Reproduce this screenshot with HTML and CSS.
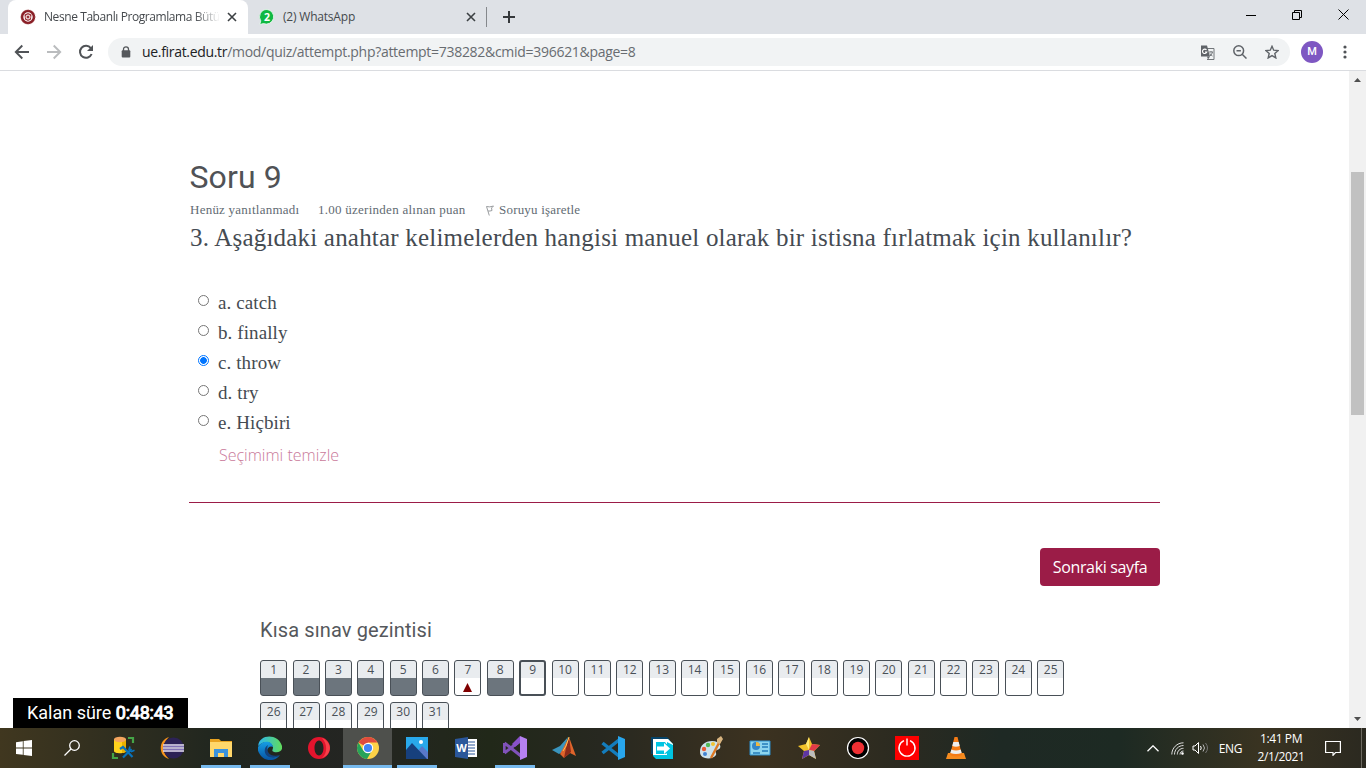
FILE: index.html
```html
<!DOCTYPE html>
<html lang="tr">
<head>
<meta charset="utf-8">
<title>Nesne Tabanlı Programlama Bütünleme</title>
<link rel="stylesheet" href="styles.css">
</head>
<body>
<div class="screen">
  <header class="tabs">
    <div class="tab tab-active">
      <svg class="fav" width="16" height="16" viewBox="0 0 16 16"><circle cx="8" cy="8" r="6" fill="#fff" stroke="#8a1f27" stroke-width="2.6"/><circle cx="8" cy="8" r="7.2" fill="none" stroke="#c99" stroke-width=".6" stroke-dasharray="1 1"/><path d="M4.500 5.500l3.500-1.500 3.500 1.500-.5 5-3 1.500-3-1.500z" fill="#9c343b"/><circle cx="8" cy="8" r="2" fill="none" stroke="#fff"/></svg>
      <span class="tab-title fade">Nesne Tabanlı Programlama Bütü</span>
      <svg class="x" width="10" height="10" viewBox="0 0 10 10"><path d="M1 1l8 8M9 1l-8 8" stroke="#3c4043" stroke-width="1.600"/></svg>
    </div>
    <div class="tab tab-second">
      <svg class="fav" width="16" height="16" viewBox="0 0 16 16"><path d="M8 .5a7.300 7.300 0 1 1-3.500 14L.8 15.500l1-3.600A7.300 7.300 0 0 1 8 .5z" fill="#10b843" stroke="#eefbf1" stroke-width=".8"/><text x="8" y="11.700" text-anchor="middle" class="badge">2</text></svg>
      <span class="tab-title">(2) WhatsApp</span>
      <svg class="x" width="10" height="10" viewBox="0 0 10 10"><path d="M1 1l8 8M9 1l-8 8" stroke="#3c4043" stroke-width="1.600"/></svg>
    </div>
    <div class="tab-new"><svg width="12" height="12" viewBox="0 0 12 12"><path d="M6 0v12M0 6h12" stroke="#35383b" stroke-width="2"/></svg></div>
    <div class="win">
      <svg width="10" height="10" viewBox="0 0 10 10"><path d="M0 5.500h10" stroke="#000"/></svg>
      <svg width="10" height="10" viewBox="0 0 10 10" fill="none" stroke="#000"><path d="M.5 2.500h7v7h-7zM2.500 2.500v-2h7v7h-2"/></svg>
      <svg width="11" height="11" viewBox="0 0 11 11"><path d="M.5.5l10 10M10.500.5l-10 10" stroke="#000"/></svg>
    </div>
  </header>
  <div class="toolbar">
    <svg class="nav-icon" width="16" height="16" viewBox="0 0 16 16" fill="none" stroke="#505357" stroke-width="1.900"><path d="M15 8H2M8.300 1.500L1.800 8l6.500 6.500"/></svg>
    <svg class="nav-icon" width="16" height="16" viewBox="0 0 16 16" fill="none" stroke="#babcbe" stroke-width="1.900"><path d="M1 8h13M7.700 1.500L14.200 8l-6.500 6.500"/></svg>
    <svg class="nav-icon" width="16" height="16" viewBox="0 0 16 16"><path d="M13.600 10A6 6 0 1 1 12.800 4.200" fill="none" stroke="#505357" stroke-width="2"/><path d="M15 1v6H9z" fill="#505357"/></svg>
    <div class="address">
      <svg width="10" height="12" viewBox="0 0 10 12"><path d="M2.500 5V3.300a2.500 2.500 0 0 1 5 0V5" fill="none" stroke="#55585c" stroke-width="1.300"/><rect x=".7" y="4.300" width="8.600" height="7.300" rx="1" fill="#55585c"/></svg>
      <span class="url"><b>ue.firat.edu.tr</b>/mod/quiz/attempt.php?attempt=738282&amp;cmid=396621&amp;page=8</span>
      <svg width="15" height="15" viewBox="0 0 15 15"><path d="M7 3.500h7v11H7" fill="#f1f3f4" stroke="#72767a"/><path d="M1 .5h6l3 11H1z" fill="#5f6368"/><path d="M6.500 5a2.200 2.200 0 1 0 .3 2H5" fill="none" stroke="#fff" stroke-width="1.100"/><path d="M9 7h4M11 6v1M12.500 7q-.5 2.500-2.500 4M10 8.500q1 2 2.500 2.500" fill="none" stroke="#72767a"/><path d="M7 11.500h3l-2 3z" fill="#5f6368"/></svg>
      <svg class="mag" width="14" height="14" viewBox="0 0 14 14" fill="none" stroke="#5f6368" stroke-width="1.500"><circle cx="5.700" cy="5.700" r="4.900"/><path d="M3.500 5.700h4.400M9.200 9.200l4.300 4.300"/></svg>
      <svg class="star" width="14" height="14" viewBox="0 0 14 14"><path d="M7 1.300l1.700 3.900 4.400.4-3.300 2.900 1 4.400L7 10.600l-3.800 2.300 1-4.400L.9 5.600l4.400-.4z" fill="none" stroke="#5f6368" stroke-width="1.400"/></svg>
    </div>
    <div class="avatar">M</div>
    <svg class="dots" width="4" height="14" viewBox="0 0 4 14" fill="#505357"><circle cx="2" cy="2" r="1.600"/><circle cx="2" cy="7" r="1.600"/><circle cx="2" cy="12" r="1.600"/></svg>
  </div>

  <div class="viewport">
    <main class="page">
      <h3 class="title">Soru 9</h3>
      <div class="info">
        <span class="i1">Henüz yanıtlanmadı</span><span class="i2">1.00 üzerinden alınan puan</span>
        <svg width="9" height="11" viewBox="0 0 9 11" fill="none" stroke="#9a9da0"><path d="M.5 1.500l2.800 9M.5 1.500q3 1 7-.5L5.500 3l.5 2.500q-2 .8-4 .5" /></svg><span class="i3">Soruyu işaretle</span>
      </div>
      <p class="question">3. Aşağıdaki anahtar kelimelerden hangisi manuel olarak bir istisna fırlatmak için kullanılır?</p>
      <div class="answers">
        <label><i class="radio"></i><span>a. catch</span></label>
        <label><i class="radio"></i><span>b. finally</span></label>
        <label><i class="radio radio-on"></i><span>c. throw</span></label>
        <label><i class="radio"></i><span>d. try</span></label>
        <label><i class="radio"></i><span>e. Hiçbiri</span></label>
      </div>
      <a class="clear">Seçimimi temizle</a>
      <div class="rule"></div>
      <div class="actions"><button class="next">Sonraki sayfa</button></div>
      <section class="quiznav">
        <h5>Kısa sınav gezintisi</h5>
        <div class="cells">
          <a class="cell done">1</a><a class="cell done">2</a><a class="cell done">3</a><a class="cell done">4</a><a class="cell done">5</a><a class="cell done">6</a><a class="cell">7<svg width="9" height="9" viewBox="0 0 9 9"><path d="M4.500 0L9 9H0z" fill="#800000"/></svg></a><a class="cell done">8</a><a class="cell current">9</a><a class="cell">10</a><a class="cell">11</a><a class="cell">12</a><a class="cell">13</a><a class="cell">14</a><a class="cell">15</a><a class="cell">16</a><a class="cell">17</a><a class="cell">18</a><a class="cell">19</a><a class="cell">20</a><a class="cell">21</a><a class="cell">22</a><a class="cell">23</a><a class="cell">24</a><a class="cell">25</a><a class="cell">26</a><a class="cell">27</a><a class="cell">28</a><a class="cell">29</a><a class="cell">30</a><a class="cell">31</a>
        </div>
      </section>
    </main>
    <div class="scrollbar"><svg width="7" height="4" viewBox="0 0 7 4"><path d="M3.500 0L7 4H0z" fill="#505050"/></svg><div class="thumb"></div><svg width="7" height="4" viewBox="0 0 7 4"><path d="M3.500 4L7 0H0z" fill="#505050"/></svg></div>
    <div class="timer"><span>Kalan süre</span> <b>0:48:43</b></div>
  </div>

  <footer class="taskbar">
    <div class="task start"><svg width="16" height="16" viewBox="0 0 16 16" fill="#fff"><path d="M0 2.200l6.800-1v6.300H0zM7.600 1.100L16 0v7.500H7.600zM0 8.400h6.800v6.400L0 13.900zM7.600 8.400H16V16l-8.400-1.100z"/></svg></div>
    <div class="task start"><svg width="16" height="16" viewBox="0 0 16 16" fill="none" stroke="#fff" stroke-width="1.300"><circle cx="10.500" cy="5.500" r="4.800"/><path d="M7 9L.5 15.500"/></svg></div>
    <div class="task first"><svg width="24" height="24" viewBox="0 0 24 24"><path d="M3 3v12c0 3 12 3 12 0V3z" fill="#ffd21c"/><path d="M11 4h4v12l-4 1z" fill="#eab000"/><ellipse cx="9" cy="3.500" rx="6" ry="2.700" fill="#f3a45e"/><path d="M17 2h5v5M2 17v5h5" fill="none" stroke="#45a447" stroke-width="2.200"/><path d="M9 13l3-2 3 3M13.500 12.500l8 8.500M20.500 13L12 21.500" fill="none" stroke="#0873bd" stroke-width="2.200"/><path d="M19 10.500l-1 3 2.500 2 3-1.200" fill="none" stroke="#0873bd" stroke-width="1.600"/></svg></div>
    <div class="task"><svg width="24" height="24" viewBox="0 0 24 24"><path d="M9 1C-2 4-2 20 9 23C2 17 2 7 9 1z" fill="#f7941e"/><circle cx="13.500" cy="12" r="10.500" fill="#2c2255"/><path d="M3 9h21M3 12h21M3 15h21" stroke="#e8e2f5" stroke-width="1.600"/><path d="M3 10.500h21M3 13.500h21" stroke="#8172b5" stroke-width="1"/></svg></div>
    <div class="task open"><svg width="24" height="24" viewBox="0 0 24 24"><path d="M1 3h9l2 2h11v16H1z" fill="#e8a321"/><path d="M1 6h22v15H1z" fill="#ffd76b"/><path d="M5 21v-8h14v8h-4v-4H9v4z" fill="#3a92dd"/></svg></div>
    <div class="task open"><svg width="24" height="24" viewBox="0 0 24 24"><defs><linearGradient id="edge-a" x2="1"><stop stop-color="#2db6ef"/><stop offset="1" stop-color="#61dc5b"/></linearGradient><linearGradient id="edge-b" y2="1" x2="0"><stop stop-color="#169ee4"/><stop offset="1" stop-color="#0753a3"/></linearGradient></defs><path d="M.2 10C1-2 20-3 24 10c1 5-3 7-8 6-3-1-1-2-1-5C13 4 5 5 .2 10z" fill="url(#edge-a)"/><path d="M0 11C4 4 14 4 15 11c-3-2-8 2-5 7 2 4 8 4 12 1-5 7-14 6-18 2-3-3-5-7-4-10z" fill="url(#edge-b)"/><path d="M10 9c-5 3-4 10 1 12 4 1 8 0 11-2-9 3-15-3-12-10z" fill="#13427e"/></svg></div>
    <div class="task"><svg width="24" height="24" viewBox="0 0 24 24"><path fill-rule="evenodd" d="M12 1a11 11 0 1 0 0 22 11 11 0 1 0 0-22zm0 3.500c3 0 4.500 4 4.500 7.500s-1.500 7.500-4.500 7.500-4.500-4-4.500-7.500S9 4.500 12 4.500z" fill="#e3142d"/><path d="M15 2c11 4 10 17 0 20 6-5 5-15 0-20z" fill="#ff5355" opacity=".7"/></svg></div>
    <div class="task open active"><svg width="24" height="24" viewBox="0 0 24 24"><circle cx="12" cy="12" r="11" fill="#fdd247"/><path d="M12 12L2.500 6.500A11 11 0 0 1 21.500 6.500H12z" fill="#df4b3d"/><path d="M2.500 6.500A11 11 0 0 0 11 23l5-8.500-4-2.500-4.700 2.700z" fill="#26a35a"/><circle cx="12" cy="12" r="5.200" fill="#fff"/><circle cx="12" cy="12" r="4.100" fill="#4285f4"/></svg></div>
    <div class="task open"><svg width="24" height="24" viewBox="0 0 24 24"><path d="M1 1h22v22H1z" fill="#29a9eb"/><path d="M12 16l5-6 6 6v7H12z" fill="#5978c9"/><path d="M1 14l6-7 15 16H1z" fill="#17407d"/><circle cx="16" cy="6" r="2" fill="#fff"/></svg></div>
    <div class="task"><svg width="24" height="24" viewBox="0 0 24 24"><path d="M12 3h11v18H12z" fill="#fff"/><path d="M13 6h8M13 9h8M13 12h8M13 15h8M13 18h8" stroke="#2b579a"/><path d="M1 3l13-2v22L1 21z" fill="#2b579a"/><text x="7.500" y="16" text-anchor="middle" class="word-letter">W</text></svg></div>
    <div class="task open"><svg width="24" height="24" viewBox="0 0 24 24"><path d="M1.200 7v10M1.500 7L18 20M1.500 17L18 4" stroke="#8052ba" stroke-width="3"/><path d="M17 0l7 3v18l-7 3z" fill="#b681f2"/><path d="M17 0L9 8l3 3 5-4z" fill="#8951ca"/></svg></div>
    <div class="task"><svg width="24" height="24" viewBox="0 0 24 24"><path d="M0 14l8-4 8-9-4 14-5 3z" fill="#3994bd"/><path d="M8 18l9-17 7 19-6-3-6 5z" fill="#de642b"/><path d="M17 1l2 15-7 6 2-10z" fill="#8d2b19"/><path d="M17 1l-3 9-3 5" stroke="#ffc256" fill="none"/></svg></div>
    <div class="task"><svg width="24" height="24" viewBox="0 0 24 24"><path d="M1.500 7L18 20M1.500 17L18 4" stroke="#147dbd" stroke-width="3.500"/><path d="M17 0l7 3v18l-7 3z" fill="#28a6ed"/></svg></div>
    <div class="task"><svg width="24" height="24" viewBox="0 0 24 24"><path d="M1 1h16l3 3v14H1z" fill="#064368"/><path d="M3 3h15l5 5v15H6l-3-3z" fill="#00c4e2"/><path d="M3 3h15l5 5v1l-6-3H3z" fill="#fff"/><path d="M3 3h14v5H7v8h10v3H3z" fill="#fff"/><path d="M6 6h9l3 4v7l-3 1H6z" fill="#00c4e2"/><path d="M7 10.500h7V7l6 5.500-6 5.500v-3.500H7z" fill="#fff"/></svg></div>
    <div class="task"><svg width="24" height="24" viewBox="0 0 24 24"><path d="M1 16C1 9 6 5 13 5c9 0 11 8 5 9-3 1 0 3-1 5C14 24 1 24 1 16z" fill="#cce2ed"/><circle cx="5" cy="13" r="2.200" fill="#e95b37"/><circle cx="9" cy="9" r="2.200" fill="#54b957"/><circle cx="14" cy="8" r="2" fill="#f1c333"/><circle cx="6" cy="18" r="2" fill="#4082d2"/><path d="M21 5l-9 17" stroke="#dc7825" stroke-width="2.400"/><path d="M18 3l4-3 2 3-3 5-3-1z" fill="#d9b580"/></svg></div>
    <div class="task"><svg width="24" height="24" viewBox="0 0 24 24"><path d="M2 5h20v14H2z" fill="#8dd5ef" stroke="#2b8dcc"/><circle cx="8" cy="10" r="4" fill="#3586c7"/><path d="M8 10V6a4 4 0 0 1 4 4z" fill="#f0b842"/><path d="M14 8h6M14 11h6M5 17h7M14 15h6" stroke="#247cbb" stroke-width="1.500"/></svg></div>
    <div class="task"><svg width="24" height="24" viewBox="0 0 24 24"><path d="M12 1l3 7 8 1-6 6 2 8-7-4-7 4 2-8-6-5 8-2z" fill="#f1c229"/><path d="M12 14l3-6 8 1-6 6z" fill="#e23b48"/><path d="M12 14l5 1 2 8-7-4z" fill="#bcbcbc"/><path d="M12 14v5l-7 4 2-8z" fill="#5d36a4"/><path d="M12 1v13L9 8z" fill="#ffea75"/></svg></div>
    <div class="task"><svg width="24" height="24" viewBox="0 0 24 24"><circle cx="12" cy="12" r="10.500" fill="#000" stroke="#fff" stroke-width="1.200"/><circle cx="12" cy="12" r="6.200" fill="#ee2f33"/></svg></div>
    <div class="task"><svg width="24" height="24" viewBox="0 0 24 24"><path d="M0 0h24v24H0z" fill="#fe0000"/><path d="M9 4.700a8 8 0 1 0 6 0M12 2.500v7" fill="none" stroke="#fff" stroke-width="1.400"/></svg></div>
    <div class="task"><svg width="24" height="24" viewBox="0 0 24 24"><path d="M4 17h16l2 6H2z" fill="#f58b1f"/><path d="M10.500 1h3L18 19q-6 3-12 0z" fill="#f47b16"/><path d="M9.300 6h5.400l1 4q-3.700 1.300-7.400 0zM7.300 13.500q4.700 2 9.400 0l1 3.500q-5.700 2-11.400 0z" fill="#eee"/></svg></div>
    <div class="tray">
      <svg width="12" height="7" viewBox="0 0 12 7"><path d="M.5 6.300L6 .8l5.500 5.500" fill="none" stroke="#fff" stroke-width="1.300"/></svg>
      <svg class="wifi" width="13" height="13" viewBox="0 0 13 13" fill="none" stroke="#ddd"><path d="M.8 12.500C.8 6 6 .8 12.500.8M3.500 12.500c0-5 4-9 9-9M6.300 12.500c0-3.500 2.700-6.200 6.200-6.200"/><path d="M9 12.500c0-2 1.500-3.500 3.500-3.500"/><circle cx="11.500" cy="11.500" r="1" fill="#fff"/></svg>
      <svg class="vol" width="17" height="14" viewBox="0 0 17 14" fill="none" stroke="#fff"><path d="M1 5h2l3.500-3.500v11L3 9H1zM8.500 5q1.500 2 0 4"/><path d="M11 3.500q3 3.500 0 7" stroke="#bbb"/><path d="M13.500 2q4 5 0 10" stroke="#777"/></svg>
      <span class="lang">ENG</span>
      <div class="clock"><span>1:41 PM</span><span>2/1/2021</span></div>
      <svg class="note" width="16" height="16" viewBox="0 0 16 16"><path d="M.6 1.500h14.800v11H10.500L8 15.300V12.500H.6z" fill="none" stroke="#fff" stroke-width="1.200"/></svg>
    </div>
  </footer>
</div>
</body>
</html>
```

FILE: styles.css
```css
* { box-sizing: border-box; }
body { margin: 0; background: #fff; font-family: "Open Sans", "Noto Sans", sans-serif; overflow: hidden; }
svg { display: block; flex: none; }
.screen { width: 1366px; height: 768px; display: flex; flex-direction: column; overflow: hidden; }

.tabs { height: 34px; flex: none; background: #dee1e6; display: flex; align-items: stretch; padding-left: 8px; }
.tab { display: flex; align-items: center; font-size: 12px; color: #45494d; }
.tab-active { width: 240px; background: #fff; border-radius: 8px 8px 0 0; padding: 0 11px 0 12px; }
.tab-second { width: 238px; padding: 0 10px 0 11px; }
.tab-title { flex: 1; margin-left: 8px; white-space: nowrap; letter-spacing: -.2px; line-height: 20px; }
.tab-active .tab-title { letter-spacing: -.42px; }
.fade { -webkit-mask-image: linear-gradient(90deg, #000 150px, transparent 176px); mask-image: linear-gradient(90deg, #000 150px, transparent 176px); }
.badge { font: bold 10.500px "Open Sans", sans-serif; fill: #fff; }
.tab-new { display: flex; align-items: center; margin: 7px 0; padding-left: 16px; border-left: 1px solid #85888c; }
.win { margin-left: auto; width: 119px; padding: 0 17px 5px 0; display: flex; align-items: center; justify-content: space-between; }
.win svg:first-child { margin-left: -1px; }

.toolbar { height: 37px; flex: none; display: flex; align-items: center; border-bottom: 1px solid #dadce0; padding-left: 14px; }
.nav-icon { margin-right: 16px; }
.address { width: 1182px; height: 28px; margin-left: -2px; padding: 0 11px 0 13px; border-radius: 14px; background: #f1f3f4; display: flex; align-items: center; }
.url { flex: 1; margin-left: 11px; font-size: 14px; line-height: 26px; color: #686c71; letter-spacing: -.29px; white-space: nowrap; }
.url b { font-weight: 400; color: #202124; letter-spacing: -.32px; }
.mag { margin-left: 18px; }
.star { margin-left: 18px; }
.avatar { width: 22px; height: 22px; margin-left: 11px; border-radius: 50%; background: #7e57c2; color: #fff; font: 500 11px/22px Roboto, sans-serif; text-align: center; }
.dots { margin-left: 20px; }

.viewport { height: 657px; flex: none; position: relative; display: flex; overflow: hidden; }
.page { width: 1349px; height: 657px; padding: 86px 189px 0 190px; color: #495057; overflow: hidden; }
.title { margin: 0 0 0 -.5px; font: 400 32px/40px Roboto, sans-serif; letter-spacing: .1px; color: #505256; }
.info { display: flex; align-items: center; height: 26px; font: 13px/26px "Liberation Serif", serif; color: #626b73; white-space: nowrap; }
.i1 { width: 128px; letter-spacing: .24px; }
.i2 { width: 168px; letter-spacing: .26px; }
.i3 { margin-left: 4px; letter-spacing: .2px; }
.question { margin: -1px 0 0; font: 25px/32px "Liberation Serif", serif; letter-spacing: .2px; white-space: nowrap; color: #454b52; }
.answers { padding: 34px 0 0 7px; }
.answers label { display: flex; height: 30px; font: 19px/30px "Liberation Serif", serif; letter-spacing: .1px; color: #454b52; white-space: nowrap; }
.radio { width: 11px; height: 11px; margin: 7px 9px 0 1px; border: 1px solid #767676; border-radius: 50%; background: #fff; flex: none; }
.radio-on { border-color: #0075ff; background: radial-gradient(circle, #0075ff 3px, #fff 3.700px); }
.clear { display: block; margin: 2px 0 0 29px; font: 300 16px/30px "Open Sans", sans-serif; color: #c9799a; letter-spacing: 0; }
.rule { margin: 32px 0 45px -1px; height: 1px; background: #9b1c47; width: 971px; }
.actions { display: flex; justify-content: flex-end; }
.next { width: 120px; height: 38px; padding: 0; border: 0; border-radius: 4px; background: #9b1c47; color: #fff; font: 16px/38px "Open Sans", sans-serif; letter-spacing: -.35px; white-space: nowrap; }
.quiznav { padding: 31px 0 0 70px; }
.quiznav h5 { margin: 0 0 17px; font: 400 20px/26px Roboto, sans-serif; letter-spacing: .12px; color: #55585c; }
.cells { display: grid; grid-template-columns: repeat(25, 27px); column-gap: 5.380px; row-gap: 6px; width: 810px; padding-left: .15px; }
.cell { height: 36px; border: 1px solid #495057; border-radius: 3px; background: linear-gradient(#e9ecef 17px, #fff 17px); text-align: center; font: 12px/18px "Open Sans", sans-serif; color: #495057; overflow: hidden; }
.done { background: linear-gradient(#e9ecef 17px, #6c757d 17px); }
.current { border-width: 2px; line-height: 16px; background: linear-gradient(#e9ecef 16px, #fff 16px); }
.cell svg { margin: 4px auto 0; }
.scrollbar { width: 17px; background: #f1f1f1; display: flex; flex-direction: column; align-items: center; padding: 7px 0; }
.thumb { width: 13px; height: 243px; margin: 90px 0 auto; background: #c1c1c1; }
.timer { position: absolute; left: 13px; bottom: 0; width: 175px; height: 30px; background: #000; color: #fff; font: 18px/30px Roboto, sans-serif; padding-left: 14px; white-space: nowrap; }
.timer b { font-weight: 400; -webkit-text-stroke: 1px #fff; letter-spacing: -.25px; }

.taskbar { height: 40px; flex: none; display: flex; background: linear-gradient(90deg, #40371f 0, #33301f 90px, #20261f 220px, #242522 350px, #212819 490px, #272820 600px, #3c3220 760px, #2b2a20 900px, #1e2924 1000px, #1d2a23 1120px, #393321 1260px, #2b2920 1366px); }
.task { width: 49px; padding-top: 8px; display: flex; justify-content: center; align-items: flex-start; background-repeat: no-repeat; }
.start { width: 48px; padding-top: 12px; }
.first { margin-left: 2px; }
.open { background-image: linear-gradient(#76b9ed, #76b9ed); background-size: 40px 3px; background-position: center bottom; }
.active { background-color: #4e504c; background-size: 100% 3px; }
.word-letter { font: bold 11px "Open Sans", sans-serif; fill: #fff; }
.tray { flex: 1; display: flex; align-items: center; justify-content: flex-end; color: #fff; font-size: 12px; padding-right: 4px; border-right: 1px solid #6c6960; margin-right: 4px; }
.wifi { margin-left: 12px; }
.vol { margin-left: 8px; }
.lang { margin-left: 10px; letter-spacing: -.4px; }
.clock { width: 60px; margin-left: 9px; display: flex; flex-direction: column; align-items: center; line-height: 18px; letter-spacing: -.4px; }
.note { margin: 0 16px 0 14px; }
```
